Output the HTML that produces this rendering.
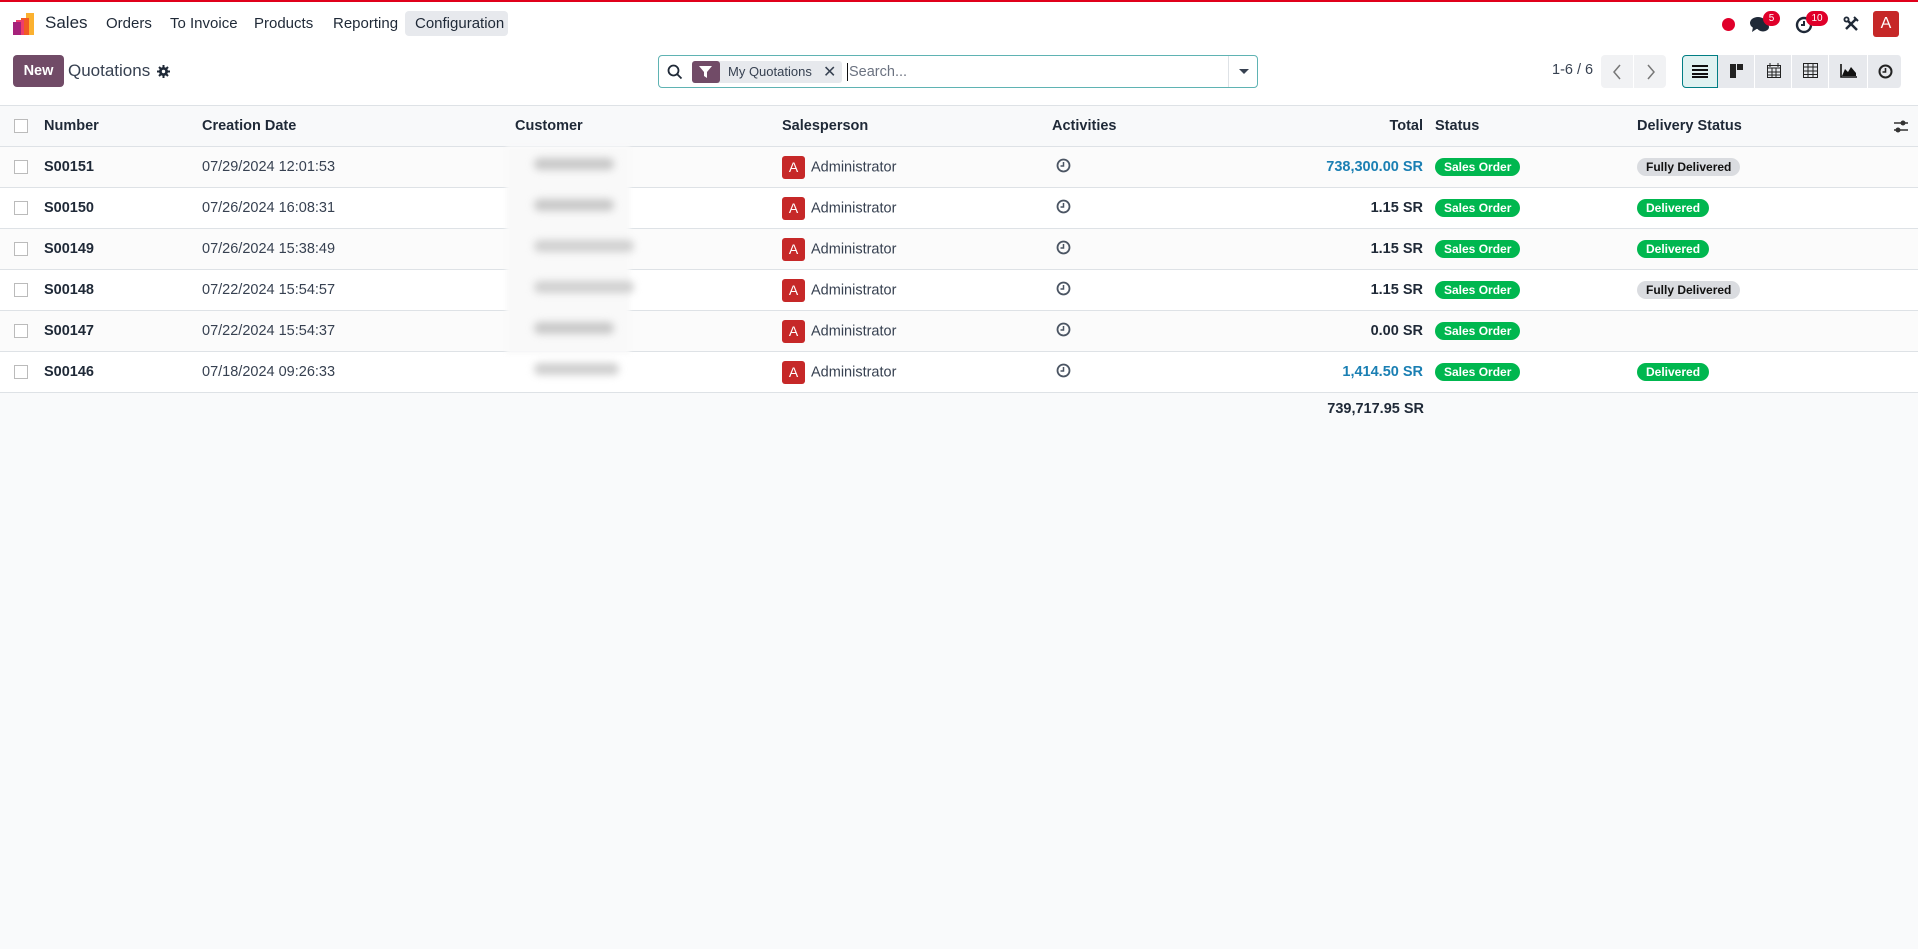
<!DOCTYPE html>
<html><head><meta charset="utf-8"><style>
*{box-sizing:border-box;margin:0;padding:0}
body{width:1918px;height:949px;overflow:hidden;background:#f9fafb;font-family:"Liberation Sans",sans-serif;color:#374151;font-size:14.5px;position:relative}
.a{position:absolute}
.top{position:absolute;left:0;top:0;width:1918px;height:2px;background:#e0001b}
.nav{position:absolute;left:0;top:2px;width:1918px;height:46px;background:#fff}
.nav span{position:absolute;top:13px;font-size:15px;color:#1f2937}
.cp{position:absolute;left:0;top:48px;width:1918px;height:57px;background:#fff}
table{position:absolute;left:0;top:105px;width:1918px;border-collapse:collapse;table-layout:fixed}
th,td{height:41px;border-bottom:1px solid #dee2e6;white-space:nowrap;position:relative;overflow:visible}
th{background:#f8f9fa;font-weight:bold;color:#1f2937;text-align:left;border-top:1px solid #dee2e6}
tr.r td{background:#fff}
tr.r:nth-child(even) td{background:#fbfbfb}
.cb{display:inline-block;width:14px;height:14px;border:1px solid #bbb;background:#fff;vertical-align:middle}
.badge{display:inline-block;border-radius:10px;padding:2px 9px;font-size:12px;font-weight:bold;color:#fff;background:#00b74f}
.gray{background:#dadce0;color:#111}
.av{display:inline-block;width:23px;height:23px;background:#c62828;color:#fff;border-radius:3px;text-align:center;line-height:23px;font-size:14px;vertical-align:middle;margin-right:6px}
.vb{position:absolute;top:55px;height:33px;background:#e7e9ed;border-right:1px solid #fff}
.bl{position:absolute;left:534px;width:95px;height:12px;border-radius:6px;background:#bbb;filter:blur(4px)}
</style></head><body>
<div class="top"></div>
<div class="nav">
 <svg class="a" style="left:12px;top:11px" width="24" height="24" viewBox="0 0 24 24"><rect x="14" y="0" width="8" height="22" fill="#fbb130"/><rect x="9" y="5" width="8" height="17" fill="#f15a24"/><rect x="4" y="7" width="8" height="15" fill="#ee3d6c"/><rect x="1" y="9" width="8" height="13" fill="#a6227b"/></svg>
 <span style="left:45px;font-size:17px;top:11px">Sales</span>
 <span style="left:106px">Orders</span>
 <span style="left:170px">To Invoice</span>
 <span style="left:254px">Products</span>
 <span style="left:333px">Reporting</span>
 <div class="a" style="left:405px;top:9px;width:103px;height:25px;background:#e7e9ed;border-radius:4px"></div>
 <span style="left:415px">Configuration</span>
 <div class="a" style="left:1722px;top:16px;width:13px;height:13px;border-radius:50%;background:#e0002a"></div>
 <svg class="a" style="left:1750px;top:14px" width="20" height="18" viewBox="0 0 20 18"><ellipse cx="8" cy="7" rx="8" ry="6" fill="#1f2937"/><path d="M3 11 L2 16 L8 12Z" fill="#1f2937"/><ellipse cx="13" cy="11" rx="6" ry="4.5" fill="#1f2937"/></svg>
 <div class="a" style="left:1763px;top:9px;width:17px;height:15px;border-radius:8px;background:#e0002a;color:#fff;font-size:10px;text-align:center;line-height:15px">5</div>
 <svg class="a" style="left:1795px;top:14px" width="18" height="18" viewBox="0 0 18 18"><circle cx="9" cy="9" r="7" fill="none" stroke="#1f2937" stroke-width="2.4"/><path d="M9 5v4h-3" stroke="#1f2937" stroke-width="2" fill="none"/></svg>
 <div class="a" style="left:1806px;top:9px;width:22px;height:15px;border-radius:8px;background:#e0002a;color:#fff;font-size:10px;text-align:center;line-height:15px">10</div>
 <svg class="a" style="left:1843px;top:14px" width="16" height="16" viewBox="0 0 16 16"><path d="M3 13L13 3" stroke="#1f2937" stroke-width="2.5"/><path d="M11 1l4 4" stroke="#1f2937" stroke-width="2"/><path d="M5 5l9 9" stroke="#1f2937" stroke-width="2.5"/><circle cx="3.5" cy="3.5" r="3" fill="#1f2937"/><circle cx="3.5" cy="3.5" r="1.2" fill="#fff"/></svg>
 <div class="a" style="left:1873px;top:9px;width:26px;height:26px;background:#c62828;border-radius:3px;color:#fff;text-align:center;line-height:26px;font-size:16px">A</div>
</div>
<div class="cp">
 <div class="a" style="left:13px;top:7px;width:51px;height:32px;background:#714b67;border-radius:4px;color:#fff;font-weight:bold;text-align:center;line-height:32px;font-size:14.5px">New</div>
 <span class="a" style="left:68px;top:13px;font-size:17px;color:#374151">Quotations</span>
 <svg class="a" style="left:157px;top:17px" width="13" height="13" viewBox="0 0 13 13"><circle cx="6.5" cy="6.5" r="4.5" fill="#1f2937"/><path d="M6.5 0v13M0 6.5h13M2 2l9 9M11 2l-9 9" stroke="#1f2937" stroke-width="2"/><circle cx="6.5" cy="6.5" r="1.7" fill="#fff"/></svg>
</div>
<div class="a" style="left:658px;top:55px;width:600px;height:33px;border:1px solid #5fb3b3;border-radius:4px;background:#fff">
 <svg class="a" style="left:8px;top:8px" width="16" height="16" viewBox="0 0 16 16"><circle cx="6.5" cy="6.5" r="5" fill="none" stroke="#1f2937" stroke-width="1.8"/><path d="M10 10l4.5 4.5" stroke="#1f2937" stroke-width="1.8"/></svg>
 <div class="a" style="left:33px;top:5px;width:150px;height:22px;background:#e7e9ed;border-radius:3px"></div>
 <div class="a" style="left:33px;top:5px;width:28px;height:22px;background:#714b67;border-radius:3px"></div>
 <svg class="a" style="left:40px;top:10px" width="13" height="12" viewBox="0 0 13 12"><path d="M0 0h13L8 6v6L5 10V6Z" fill="#fff"/></svg>
 <span class="a" style="left:69px;top:8px;font-size:13px;color:#374151">My Quotations</span>
 <span class="a" style="left:164px;top:6px;font-size:16px;color:#374151">&#10005;</span>
 <div class="a" style="left:188px;top:7px;width:1px;height:18px;background:#111"></div>
 <span class="a" style="left:190px;top:8px;font-size:14.5px;color:#6b7280">Search...</span>
 <div class="a" style="left:569px;top:0;width:1px;height:31px;background:#dee2e6"></div>
 <div class="a" style="left:580px;top:13px;width:0;height:0;border-left:5px solid transparent;border-right:5px solid transparent;border-top:5px solid #374151"></div>
</div>
<span class="a" style="left:1552px;top:62px;font-size:14.5px;color:#374151">1-6 / 6</span>
<div class="a" style="left:1601px;top:55px;width:65px;height:33px;background:#f1f2f4;border-radius:4px"></div>
<div class="a" style="left:1633px;top:55px;width:1px;height:33px;background:#fff"></div>
<svg class="a" style="left:1612px;top:64px" width="10" height="16"><path d="M8 1L2 8l6 7" stroke="#777" stroke-width="1.5" fill="none"/></svg>
<svg class="a" style="left:1646px;top:64px" width="10" height="16"><path d="M2 1l6 7-6 7" stroke="#777" stroke-width="1.5" fill="none"/></svg>
<div class="vb" style="left:1682px;width:36px;background:#e0f2f1;border:1px solid #017e84;border-radius:4px 0 0 4px"></div>
<div class="vb" style="left:1718px;width:37px"></div>
<div class="vb" style="left:1755px;width:37px"></div>
<div class="vb" style="left:1792px;width:37px"></div>
<div class="vb" style="left:1829px;width:39px"></div>
<div class="vb" style="left:1868px;width:34px;border-radius:0 4px 4px 0"></div>
<svg class="a" style="left:1692px;top:64px" width="16" height="14"><path d="M0 2h16M0 6h16M0 10h16M0 13h16" stroke="#111" stroke-width="2"/></svg>
<svg class="a" style="left:1730px;top:64px" width="14" height="14"><rect x="0" y="0" width="6" height="14" fill="#222"/><rect x="7" y="0" width="6" height="6" fill="#222"/></svg>
<svg class="a" style="left:1767px;top:63px" width="14" height="15"><rect x="0.5" y="2.5" width="13" height="12" fill="none" stroke="#222"/><path d="M0 5h14M3 0v4M11 0v4M0 9h14M0 12h14M5 5v10M9 5v10" stroke="#222"/></svg>
<svg class="a" style="left:1803px;top:63px" width="15" height="15"><rect x="0.5" y="0.5" width="14" height="14" fill="none" stroke="#222"/><path d="M0 4h15M0 8h15M0 11.5h15M5 0v15M10 0v15" stroke="#222"/></svg>
<svg class="a" style="left:1840px;top:64px" width="17" height="14"><path d="M1 0v13h16" stroke="#111" stroke-width="1.6" fill="none"/><path d="M2 12L5 5 8 8 11 3 16 9V12Z" fill="#111"/></svg>
<svg class="a" style="left:1878px;top:64px" width="15" height="15"><circle cx="7.5" cy="7.5" r="6" fill="none" stroke="#222" stroke-width="2"/><path d="M7.5 4v4h-3" stroke="#222" stroke-width="1.6" fill="none"/></svg>
<table>
<colgroup><col style="width:44px"><col style="width:158px"><col style="width:313px"><col style="width:267px"><col style="width:270px"><col style="width:197px"><col style="width:176px"><col style="width:212px"><col style="width:235px"><col></colgroup>
<tr><th style="padding-left:14px"><span class="cb"></span></th><th>Number</th><th>Creation Date</th><th>Customer</th><th>Salesperson</th><th>Activities</th><th style="text-align:right;padding-right:2px">Total</th><th style="padding-left:10px">Status</th><th>Delivery Status</th><th><svg style="position:absolute;right:10px;top:14px" width="14" height="13"><path d="M0 3h14M0 10h14" stroke="#333" stroke-width="1.5"/><circle cx="9" cy="3" r="2.5" fill="#333"/><circle cx="4" cy="10" r="2.5" fill="#333"/></svg></th></tr>
<tr class="r"><td style="padding-left:14px"><span class="cb"></span></td><td style="font-weight:bold;color:#1f2937">S00151</td><td>07/29/2024 12:01:53</td><td></td><td><span class="av">A</span>Administrator</td><td style="padding-left:4px"><svg width="15" height="15"><circle cx="7.5" cy="7.5" r="6" fill="none" stroke="#4b5563" stroke-width="1.8"/><path d="M7.5 4v4h-3" stroke="#4b5563" stroke-width="1.5" fill="none"/></svg></td><td style="text-align:right;padding-right:2px;color:#1a7fb3;font-weight:bold">738,300.00&nbsp;SR</td><td style="padding-left:10px"><span class="badge">Sales Order</span></td><td><span class="badge gray">Fully Delivered</span></td><td></td></tr>
<tr class="r"><td style="padding-left:14px"><span class="cb"></span></td><td style="font-weight:bold;color:#1f2937">S00150</td><td>07/26/2024 16:08:31</td><td></td><td><span class="av">A</span>Administrator</td><td style="padding-left:4px"><svg width="15" height="15"><circle cx="7.5" cy="7.5" r="6" fill="none" stroke="#4b5563" stroke-width="1.8"/><path d="M7.5 4v4h-3" stroke="#4b5563" stroke-width="1.5" fill="none"/></svg></td><td style="text-align:right;padding-right:2px;font-weight:bold;color:#1f2937">1.15&nbsp;SR</td><td style="padding-left:10px"><span class="badge">Sales Order</span></td><td><span class="badge">Delivered</span></td><td></td></tr>
<tr class="r"><td style="padding-left:14px"><span class="cb"></span></td><td style="font-weight:bold;color:#1f2937">S00149</td><td>07/26/2024 15:38:49</td><td></td><td><span class="av">A</span>Administrator</td><td style="padding-left:4px"><svg width="15" height="15"><circle cx="7.5" cy="7.5" r="6" fill="none" stroke="#4b5563" stroke-width="1.8"/><path d="M7.5 4v4h-3" stroke="#4b5563" stroke-width="1.5" fill="none"/></svg></td><td style="text-align:right;padding-right:2px;font-weight:bold;color:#1f2937">1.15&nbsp;SR</td><td style="padding-left:10px"><span class="badge">Sales Order</span></td><td><span class="badge">Delivered</span></td><td></td></tr>
<tr class="r"><td style="padding-left:14px"><span class="cb"></span></td><td style="font-weight:bold;color:#1f2937">S00148</td><td>07/22/2024 15:54:57</td><td></td><td><span class="av">A</span>Administrator</td><td style="padding-left:4px"><svg width="15" height="15"><circle cx="7.5" cy="7.5" r="6" fill="none" stroke="#4b5563" stroke-width="1.8"/><path d="M7.5 4v4h-3" stroke="#4b5563" stroke-width="1.5" fill="none"/></svg></td><td style="text-align:right;padding-right:2px;font-weight:bold;color:#1f2937">1.15&nbsp;SR</td><td style="padding-left:10px"><span class="badge">Sales Order</span></td><td><span class="badge gray">Fully Delivered</span></td><td></td></tr>
<tr class="r"><td style="padding-left:14px"><span class="cb"></span></td><td style="font-weight:bold;color:#1f2937">S00147</td><td>07/22/2024 15:54:37</td><td></td><td><span class="av">A</span>Administrator</td><td style="padding-left:4px"><svg width="15" height="15"><circle cx="7.5" cy="7.5" r="6" fill="none" stroke="#4b5563" stroke-width="1.8"/><path d="M7.5 4v4h-3" stroke="#4b5563" stroke-width="1.5" fill="none"/></svg></td><td style="text-align:right;padding-right:2px;font-weight:bold;color:#1f2937">0.00&nbsp;SR</td><td style="padding-left:10px"><span class="badge">Sales Order</span></td><td></td><td></td></tr>
<tr class="r"><td style="padding-left:14px"><span class="cb"></span></td><td style="font-weight:bold;color:#1f2937">S00146</td><td>07/18/2024 09:26:33</td><td></td><td><span class="av">A</span>Administrator</td><td style="padding-left:4px"><svg width="15" height="15"><circle cx="7.5" cy="7.5" r="6" fill="none" stroke="#4b5563" stroke-width="1.8"/><path d="M7.5 4v4h-3" stroke="#4b5563" stroke-width="1.5" fill="none"/></svg></td><td style="text-align:right;padding-right:2px;color:#1a7fb3;font-weight:bold">1,414.50&nbsp;SR</td><td style="padding-left:10px"><span class="badge">Sales Order</span></td><td><span class="badge">Delivered</span></td><td></td></tr>
</table>
<div class="a" style="left:506px;top:146px;width:124px;height:208px;background:#f9f9f9;filter:blur(2px)"></div>
<div class="bl" style="top:158px;width:80px;background:#c8c8c8"></div>
<div class="bl" style="top:199px;width:80px;background:#c8c8c8"></div>
<div class="bl" style="top:240px;width:100px;background:#d0d0d0"></div>
<div class="bl" style="top:281px;width:100px;background:#d0d0d0"></div>
<div class="bl" style="top:322px;width:80px;background:#c8c8c8"></div>
<div class="bl" style="top:363px;width:85px;background:#cfcfcf"></div>
<div class="a" style="left:0;top:390px;width:1424px;text-align:right;font-weight:bold;color:#1f2937;padding-top:11px">739,717.95&nbsp;SR</div>
</body></html>
